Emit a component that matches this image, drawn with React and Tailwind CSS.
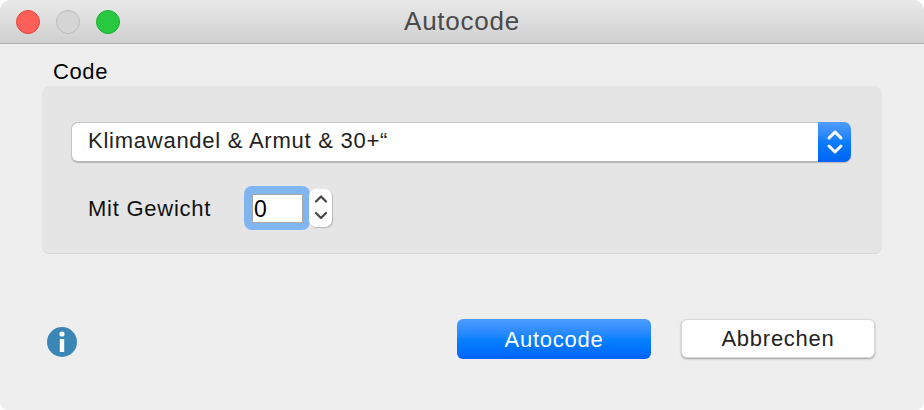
export default function App() {
  return (
    <div className="w-[924px] h-[410px] bg-white font-['Liberation_Sans',sans-serif] tracking-[0.75px]">
      <div className="w-full h-full flex flex-col bg-[#eeeeee] rounded-t-[11px] rounded-b-[8px] overflow-hidden">
        {/* title bar */}
        <div className="h-[44px] shrink-0 flex items-center pl-[16px] pr-[16px] bg-gradient-to-b from-[#e9e9e9] to-[#d0d0d0] border-b border-[#b0b0b0] relative">
          <div className="flex gap-[16px]">
            <div className="w-[24px] h-[24px] rounded-full bg-[#fe5f58] border border-[#e5443e]"></div>
            <div className="w-[24px] h-[24px] rounded-full bg-[#d5d5d5] border border-[#bcbcbc]"></div>
            <div className="w-[24px] h-[24px] rounded-full bg-[#28c93f] border border-[#1fae33]"></div>
          </div>
          <div className="absolute inset-0 flex items-center justify-center text-[26px] text-[#4a4a4a]">
            Autocode
          </div>
        </div>

        <div className="pl-[53px] mt-[14px] h-[28px] text-[22px] leading-[28px] text-black tracking-[0.6px]">Code</div>

        {/* panel */}
        <div className="ml-[42px] w-[840px] h-[168px] bg-[#e5e5e5] rounded-[8px] border-b border-[#d6d6d6] pl-[29px] pt-[36px]">
          <div className="w-[780px] h-[40px] flex rounded-[7px] shadow-[0_1px_1px_rgba(0,0,0,0.2)]">
            <div className="flex-1 bg-white rounded-l-[7px] border border-r-0 border-[#c4c4c4] border-b-[#b4b4b4] pl-[16px] text-[22px] leading-[36px] text-[#222222]">
              Klimawandel &amp; Armut &amp; 30+“
            </div>
            <div className="w-[33px] rounded-r-[7px] bg-gradient-to-b from-[#4f9cff] via-[#0a7cff] to-[#0063f5] flex items-center justify-center">
              <svg width="18" height="30" viewBox="0 0 18 30" fill="none" stroke="white" strokeWidth="3" strokeLinecap="round" strokeLinejoin="round">
                <path d="M3 11 L9 5 L15 11" />
                <path d="M3 19 L9 25 L15 19" />
              </svg>
            </div>
          </div>

          <div className="flex items-center mt-[24px] h-[44px]">
            <div className="w-[173px] pl-[17px] text-[22px] text-[#111111]">Mit Gewicht</div>
            <div className="w-[66px] h-[44px] rounded-[8px] bg-[#80b5f0] p-[8px]">
              <div className="w-[51px] h-[29px] bg-white border border-[#a8a8a8] pl-[1px] text-[23px] leading-[28px] text-black">0</div>
            </div>
            <div className="w-[23px] h-[38px] -ml-[1px] bg-white rounded-[7px] shadow-[1px_1px_1px_rgba(0,0,0,0.2)] flex items-center justify-center">
              <svg width="14" height="30" viewBox="0 0 14 30" fill="none" stroke="#444444" strokeWidth="2.2" strokeLinecap="round" strokeLinejoin="round">
                <path d="M2 8.5 L7 3.5 L12 8.5" />
                <path d="M2 20 L7 25 L12 20" />
              </svg>
            </div>
          </div>
        </div>

        {/* bottom row */}
        <div className="flex items-start mt-[65px] h-[40px] pl-[47px]">
          <svg className="mt-[8px]" width="30" height="30" viewBox="0 0 30 30">
            <circle cx="15" cy="15" r="15" fill="#3a87b7" />
            <circle cx="15" cy="7" r="2.6" fill="white" />
            <rect x="12.8" y="12" width="4.4" height="13" fill="white" />
          </svg>
          <button className="ml-[380px] w-[194px] h-[40px] rounded-[6px] bg-gradient-to-b from-[#4d9bff] via-[#0a82ff] to-[#0062fb] text-white text-[22px]">
            Autocode
          </button>
          <button className="ml-[30px] w-[194px] h-[39px] rounded-[6px] bg-white border border-[#d8d8d8] shadow-[0_1px_2px_rgba(0,0,0,0.35)] text-[#222222] text-[22px]">
            Abbrechen
          </button>
        </div>
      </div>
    </div>
  );
}
